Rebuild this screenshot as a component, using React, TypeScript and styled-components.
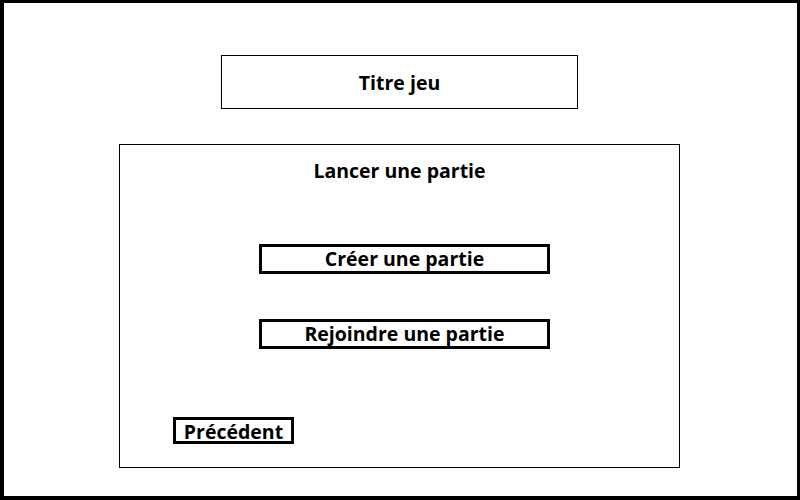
import styled, { createGlobalStyle } from "styled-components";

const GlobalStyle = createGlobalStyle`
  html, body {
    margin: 0;
    padding: 0;
    background: #ffffff;
  }
  body {
    font-family: "Open Sans", Lato, sans-serif;
    font-variant-ligatures: none;
    color: #000;
  }
`;

const Frame = styled.div`
  box-sizing: border-box;
  width: 800px;
  height: 500px;
  border-style: solid;
  border-color: #000;
  border-width: 3px 3px 4px 4px;
  background: #fff;
  display: flex;
  flex-direction: column;
  align-items: center;
  padding-right: 2px;
`;

const TitleBox = styled.div`
  box-sizing: border-box;
  margin-top: 52px;
  width: 357px;
  height: 54px;
  border: 1px solid #000;
  display: flex;
  align-items: center;
  justify-content: center;
  font-size: 19.5px;
  font-weight: 700;
`;

const Panel = styled.section`
  box-sizing: border-box;
  margin-top: 35px;
  width: 561px;
  height: 324px;
  border: 1px solid #000;
  display: flex;
  flex-direction: column;
  align-items: center;
  padding-top: 14px;
`;

const Heading = styled.h2`
  margin: 0;
  font-size: 19.5px;
  line-height: 24px;
  font-weight: 700;
`;

const Menu = styled.div`
  display: flex;
  flex-direction: column;
  gap: 45px;
  margin-top: 61px;
  padding-left: 10px;
`;

const MenuButton = styled.button<{ $width: number; $height: number; $shift?: number }>`
  box-sizing: border-box;
  width: ${({ $width }) => $width}px;
  height: ${({ $height }) => $height}px;
  border: 3px solid #000;
  background: #fff;
  padding: ${({ $shift = 0 }) => `${$shift}px 0 0`};
  font-family: inherit;
  font-variant-ligatures: none;
  font-size: 19.5px;
  font-weight: 700;
  color: #000;
  line-height: 1;
  display: flex;
  align-items: center;
  justify-content: center;
`;

const Footer = styled.div`
  align-self: stretch;
  margin-top: auto;
  padding: 0 0 23px 53px;
`;

export default function App() {
  return (
    <>
      <GlobalStyle />
      <Frame>
        <TitleBox>Titre jeu</TitleBox>
        <Panel>
          <Heading>Lancer une partie</Heading>
          <Menu>
            <MenuButton $width={291} $height={30}>
              Créer une partie
            </MenuButton>
            <MenuButton $width={291} $height={30}>
              Rejoindre une partie
            </MenuButton>
          </Menu>
          <Footer>
            <MenuButton $width={121} $height={27} $shift={3}>
              Précédent
            </MenuButton>
          </Footer>
        </Panel>
      </Frame>
    </>
  );
}
